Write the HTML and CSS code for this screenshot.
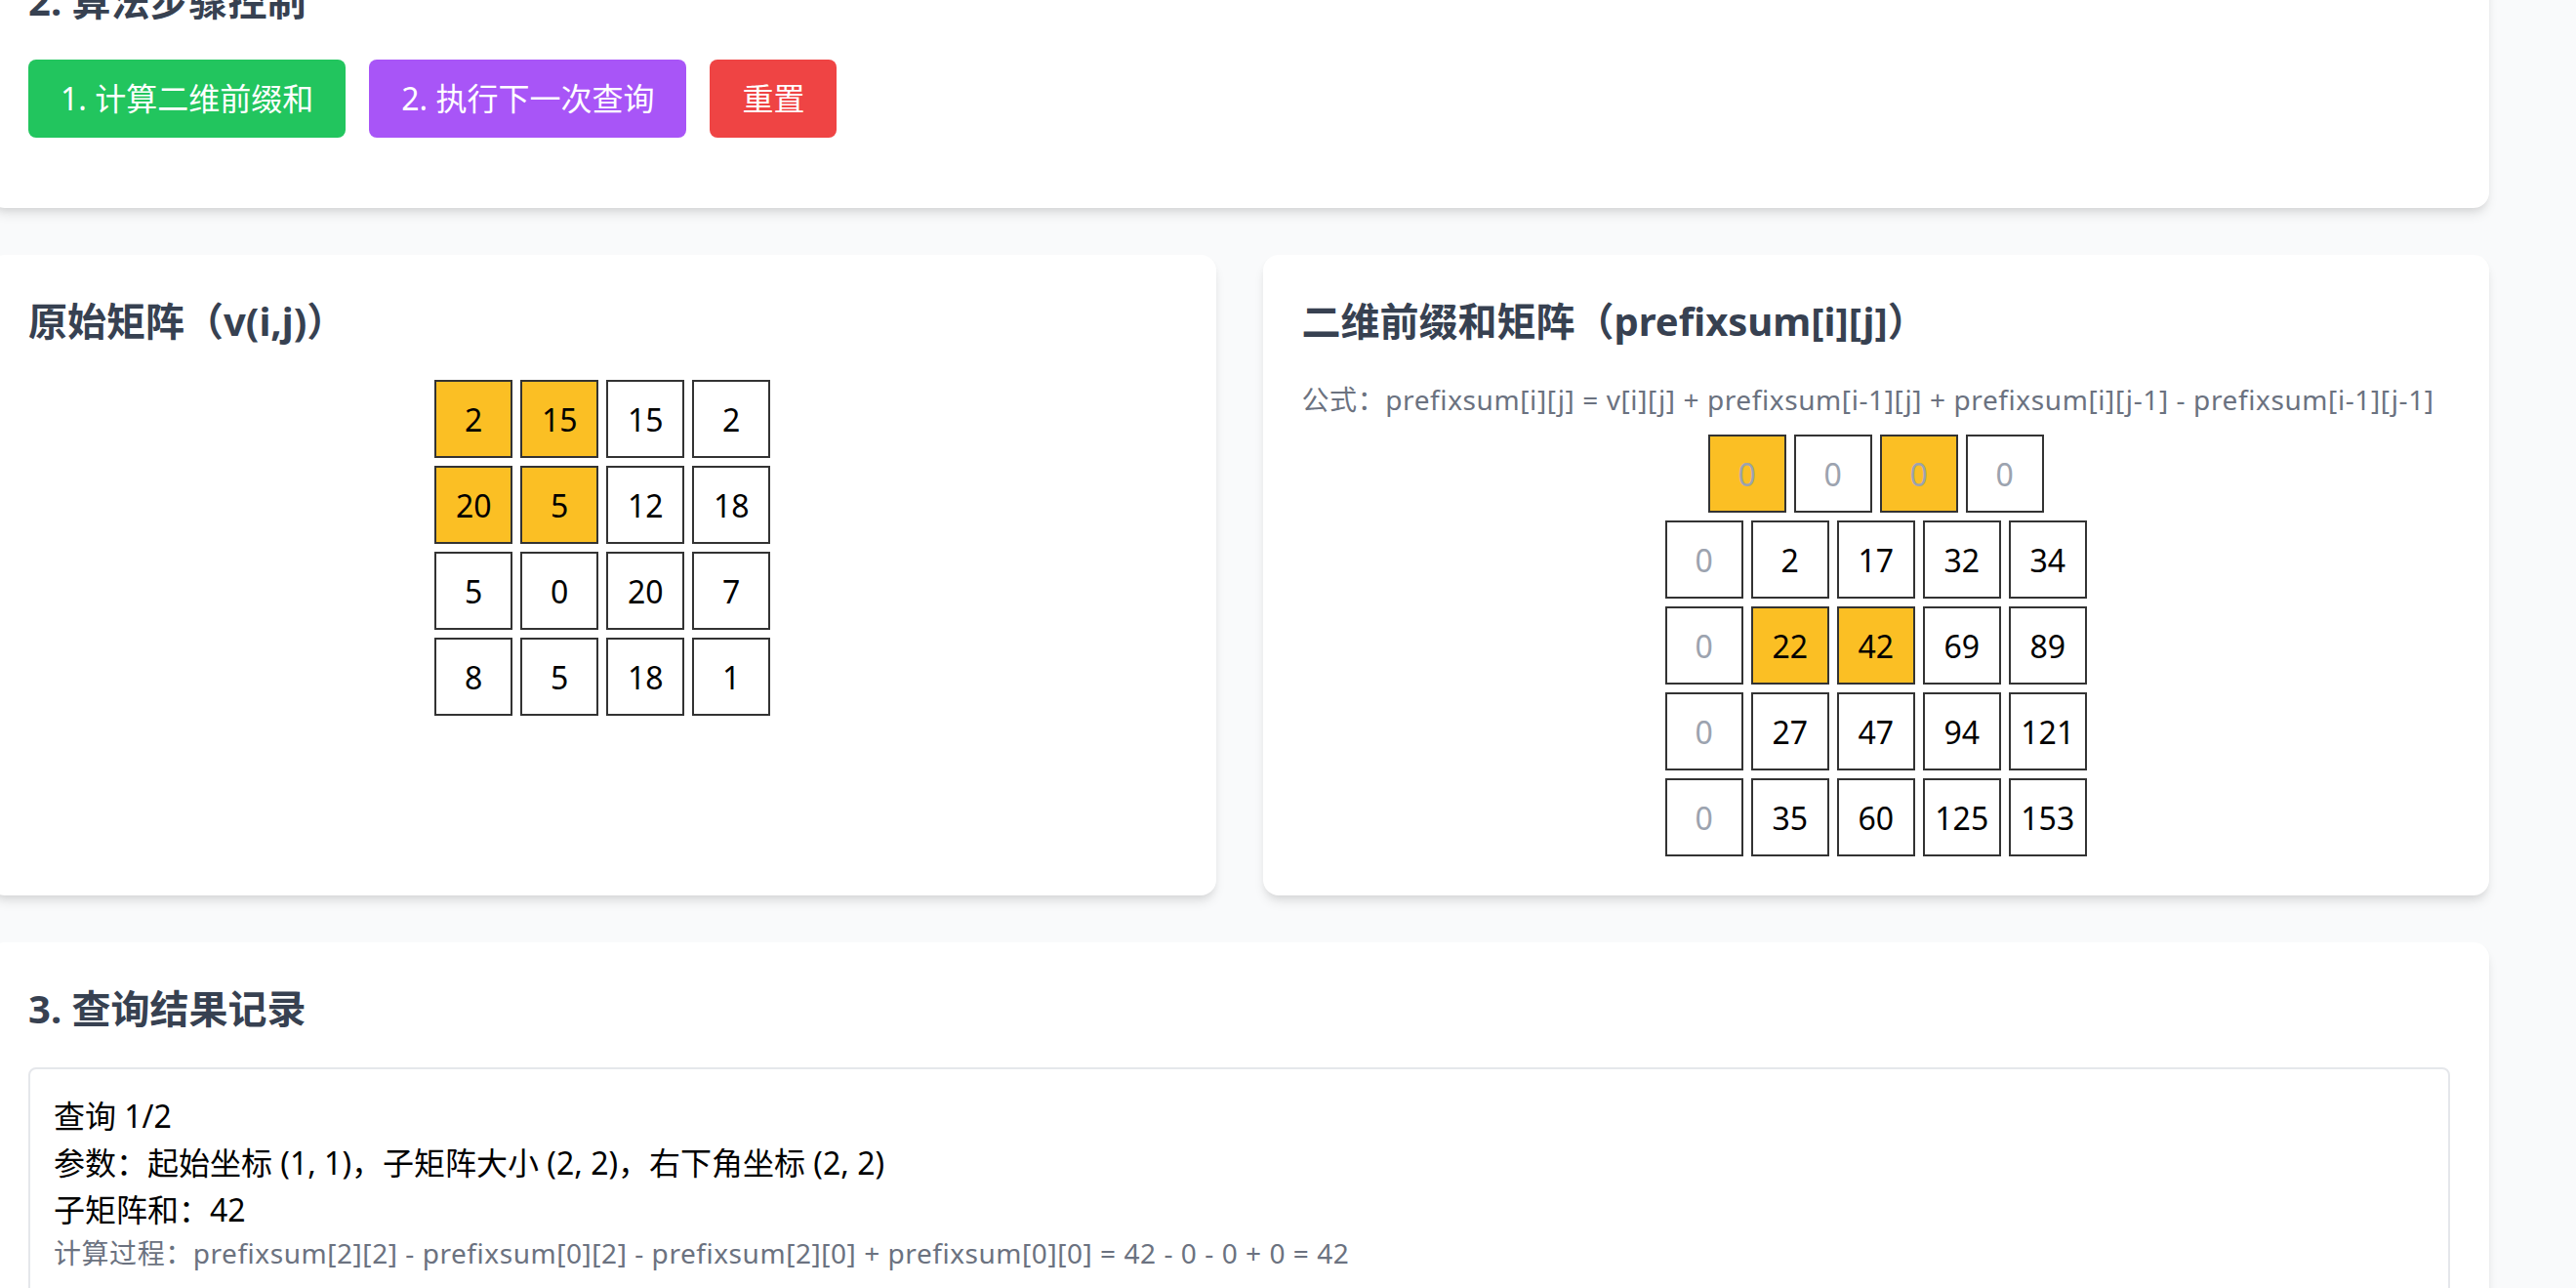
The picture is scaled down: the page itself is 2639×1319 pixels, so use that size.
FILE: index.html
```html
<!DOCTYPE html>
<html lang="zh-CN">
<head>
<meta charset="utf-8">
<title>二维前缀和</title>
<link rel="stylesheet" href="styles.css">
</head>
<body>
<div class="page">
  <section class="card card-controls">
    <h2 class="section-title">2. 算法步骤控制</h2>
    <div class="btn-row">
      <button class="btn btn-green">1. 计算二维前缀和</button>
      <button class="btn btn-purple">2. 执行下一次查询</button>
      <button class="btn btn-red">重置</button>
    </div>
  </section>

  <div class="grid2">
    <section class="card">
      <h3 class="section-title">原始矩阵（v(i,j)）</h3>
      <div class="matrix">
        <div class="mrow"><div class="cell hl">2</div><div class="cell hl">15</div><div class="cell">15</div><div class="cell">2</div></div>
        <div class="mrow"><div class="cell hl">20</div><div class="cell hl">5</div><div class="cell">12</div><div class="cell">18</div></div>
        <div class="mrow"><div class="cell">5</div><div class="cell">0</div><div class="cell">20</div><div class="cell">7</div></div>
        <div class="mrow"><div class="cell">8</div><div class="cell">5</div><div class="cell">18</div><div class="cell">1</div></div>
      </div>
    </section>
    <section class="card">
      <h3 class="section-title">二维前缀和矩阵（prefixsum[i][j]）</h3>
      <p class="formula">公式：prefixsum[i][j] = v[i][j] + prefixsum[i-1][j] + prefixsum[i][j-1] - prefixsum[i-1][j-1]</p>
      <div class="matrix">
        <div class="mrow"><div class="cell hl zero">0</div><div class="cell zero">0</div><div class="cell hl zero">0</div><div class="cell zero">0</div></div>
        <div class="mrow"><div class="cell zero">0</div><div class="cell">2</div><div class="cell">17</div><div class="cell">32</div><div class="cell">34</div></div>
        <div class="mrow"><div class="cell zero">0</div><div class="cell hl">22</div><div class="cell hl">42</div><div class="cell">69</div><div class="cell">89</div></div>
        <div class="mrow"><div class="cell zero">0</div><div class="cell">27</div><div class="cell">47</div><div class="cell">94</div><div class="cell">121</div></div>
        <div class="mrow"><div class="cell zero">0</div><div class="cell">35</div><div class="cell">60</div><div class="cell">125</div><div class="cell">153</div></div>
      </div>
    </section>
  </div>

  <section class="card">
    <h2 class="section-title">3. 查询结果记录</h2>
    <div class="query-box">
      <div class="q-line">查询 1/2</div>
      <div class="q-line">参数：起始坐标 (1, 1)，子矩阵大小 (2, 2)，右下角坐标 (2, 2)</div>
      <div class="q-line">子矩阵和：42</div>
      <div class="q-calc">计算过程：prefixsum[2][2] - prefixsum[0][2] - prefixsum[2][0] + prefixsum[0][0] = 42 - 0 - 0 + 0 = 42</div>
    </div>
  </section>
</div>
</body>
</html>
```

FILE: styles.css
```css
html, body {
  overflow: hidden;
}

body {
  margin: 0;
  background: #f9fafb;
  font-family: "Noto Sans", "Noto Sans CJK SC", sans-serif;
  color: #000;
}

.page {
  width: 2561px;
  margin: -67px 0 0 -11px;
  display: flex;
  flex-direction: column;
  gap: 48px;
}

.card {
  background: #fff;
  border-radius: 16px;
  padding: 40px;
  box-shadow: 0 8px 12px -2px rgba(0, 0, 0, 0.1), 0 4px 8px -4px rgba(0, 0, 0, 0.1);
}

.section-title {
  margin: 0 0 32px;
  font-size: 40px;
  line-height: 56px;
  font-weight: 700;
  color: #374151;
}

.btn-row {
  display: flex;
  gap: 24px;
  margin-bottom: 32px;
}

.btn {
  border: 0;
  border-radius: 8px;
  padding: 16px 33px;
  font-family: inherit;
  font-size: 32px;
  line-height: 48px;
  color: #fff;
}

.btn-green { background: #22c55e; }
.btn-purple { background: #a855f7; }
.btn-red { background: #ef4444; }

.grid2 {
  display: grid;
  grid-template-columns: 1fr 1fr;
  gap: 48px;
}

.formula {
  margin: 0 0 16px;
  font-size: 28px;
  line-height: 40px;
  letter-spacing: 0.6px;
  color: #6b7280;
}

.matrix {
  display: flex;
  flex-direction: column;
  align-items: center;
  gap: 8px;
}

.mrow {
  display: flex;
  gap: 8px;
}

.cell {
  width: 80px;
  height: 80px;
  box-sizing: border-box;
  border: 2px solid #333;
  background: #fff;
  display: flex;
  align-items: center;
  justify-content: center;
  font-size: 32px;
  color: #000;
}

.cell.hl { background: #fbbf24; }
.cell.zero { color: #9ca3af; }

.query-box {
  border: 2px solid #e5e7eb;
  border-radius: 8px;
  padding: 24px;
}

.q-line {
  font-size: 32px;
  line-height: 48px;
  color: #000;
}

.q-calc {
  font-size: 28px;
  line-height: 40px;
  letter-spacing: 0.55px;
  color: #6b7280;
}
```
